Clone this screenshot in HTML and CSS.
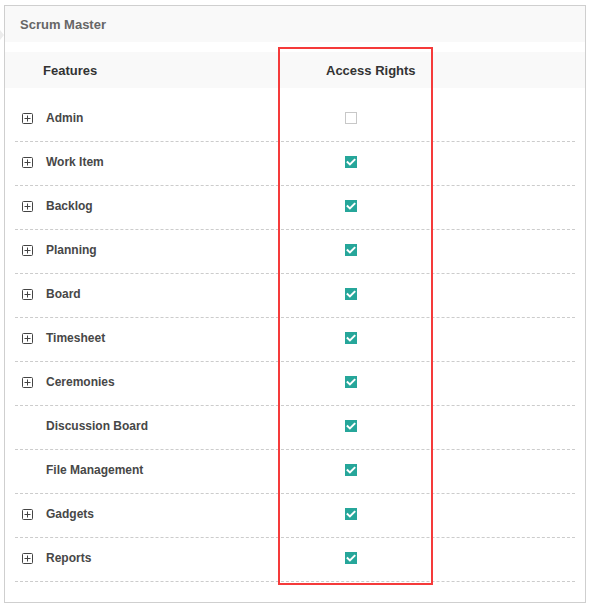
FILE: index.html
```html
<!DOCTYPE html>
<html>
<head>
<meta charset="utf-8">
<link rel="stylesheet" href="styles.css">
</head>
<body>
<div class="notch"></div>
<div class="panel">
  <div class="panel-title">Scrum Master</div>
  <div class="thead">
    <div class="th th-feat">Features</div>
    <div class="th th-acc">Access Rights</div>
  </div>
  <div class="rows">
    <div class="row"><div class="feat"><svg class="plus" viewBox="0 0 11 11"><rect x="0.5" y="0.5" width="10" height="10" rx="1"/><path d="M5.5 2.5v6M2.5 5.5h6"/></svg><span>Admin</span></div><div class="acc"><span class="cb"></span></div></div>
    <div class="row"><div class="feat"><svg class="plus" viewBox="0 0 11 11"><rect x="0.5" y="0.5" width="10" height="10" rx="1"/><path d="M5.5 2.5v6M2.5 5.5h6"/></svg><span>Work Item</span></div><div class="acc"><span class="cb on"><svg viewBox="0 0 12 12"><path d="M2.6 6.2l2.3 2.2 4.6-4.6"/></svg></span></div></div>
    <div class="row"><div class="feat"><svg class="plus" viewBox="0 0 11 11"><rect x="0.5" y="0.5" width="10" height="10" rx="1"/><path d="M5.5 2.5v6M2.5 5.5h6"/></svg><span>Backlog</span></div><div class="acc"><span class="cb on"><svg viewBox="0 0 12 12"><path d="M2.6 6.2l2.3 2.2 4.6-4.6"/></svg></span></div></div>
    <div class="row"><div class="feat"><svg class="plus" viewBox="0 0 11 11"><rect x="0.5" y="0.5" width="10" height="10" rx="1"/><path d="M5.5 2.5v6M2.5 5.5h6"/></svg><span>Planning</span></div><div class="acc"><span class="cb on"><svg viewBox="0 0 12 12"><path d="M2.6 6.2l2.3 2.2 4.6-4.6"/></svg></span></div></div>
    <div class="row"><div class="feat"><svg class="plus" viewBox="0 0 11 11"><rect x="0.5" y="0.5" width="10" height="10" rx="1"/><path d="M5.5 2.5v6M2.5 5.5h6"/></svg><span>Board</span></div><div class="acc"><span class="cb on"><svg viewBox="0 0 12 12"><path d="M2.6 6.2l2.3 2.2 4.6-4.6"/></svg></span></div></div>
    <div class="row"><div class="feat"><svg class="plus" viewBox="0 0 11 11"><rect x="0.5" y="0.5" width="10" height="10" rx="1"/><path d="M5.5 2.5v6M2.5 5.5h6"/></svg><span>Timesheet</span></div><div class="acc"><span class="cb on"><svg viewBox="0 0 12 12"><path d="M2.6 6.2l2.3 2.2 4.6-4.6"/></svg></span></div></div>
    <div class="row"><div class="feat"><svg class="plus" viewBox="0 0 11 11"><rect x="0.5" y="0.5" width="10" height="10" rx="1"/><path d="M5.5 2.5v6M2.5 5.5h6"/></svg><span>Ceremonies</span></div><div class="acc"><span class="cb on"><svg viewBox="0 0 12 12"><path d="M2.6 6.2l2.3 2.2 4.6-4.6"/></svg></span></div></div>
    <div class="row"><div class="feat"><span class="noicon"></span><span>Discussion Board</span></div><div class="acc"><span class="cb on"><svg viewBox="0 0 12 12"><path d="M2.6 6.2l2.3 2.2 4.6-4.6"/></svg></span></div></div>
    <div class="row"><div class="feat"><span class="noicon"></span><span>File Management</span></div><div class="acc"><span class="cb on"><svg viewBox="0 0 12 12"><path d="M2.6 6.2l2.3 2.2 4.6-4.6"/></svg></span></div></div>
    <div class="row"><div class="feat"><svg class="plus" viewBox="0 0 11 11"><rect x="0.5" y="0.5" width="10" height="10" rx="1"/><path d="M5.5 2.5v6M2.5 5.5h6"/></svg><span>Gadgets</span></div><div class="acc"><span class="cb on"><svg viewBox="0 0 12 12"><path d="M2.6 6.2l2.3 2.2 4.6-4.6"/></svg></span></div></div>
    <div class="row"><div class="feat"><svg class="plus" viewBox="0 0 11 11"><rect x="0.5" y="0.5" width="10" height="10" rx="1"/><path d="M5.5 2.5v6M2.5 5.5h6"/></svg><span>Reports</span></div><div class="acc"><span class="cb on"><svg viewBox="0 0 12 12"><path d="M2.6 6.2l2.3 2.2 4.6-4.6"/></svg></span></div></div>
  </div>
  <div class="highlight"></div>
</div>
</body>
</html>
```
FILE: styles.css
```css
html, body {
  margin: 0;
  padding: 0;
  background: #fff;
  font-family: "Liberation Sans", Arial, sans-serif;
}
body {
  position: relative;
  padding: 5px 4px 0 4px;
  width: 582px;
}
.notch {
  position: absolute;
  left: 0;
  top: 30px;
  width: 0;
  height: 0;
  border-top: 5px solid transparent;
  border-bottom: 5px solid transparent;
  border-left: 4px solid #ececec;
}
.panel {
  position: relative;
  box-sizing: border-box;
  width: 582px;
  height: 598px;
  border: 1px solid #cfcfcf;
  background: #fff;
}
.panel-title {
  height: 35px;
  line-height: 35px;
  padding-top: 1px;
  padding-left: 15px;
  background: #f9f9f9;
  color: #666;
  font-size: 13px;
  font-weight: bold;
}
.thead {
  margin-top: 10px;
  height: 36px;
  background: #f9f9f9;
  display: flex;
  align-items: center;
  font-size: 13px;
  font-weight: bold;
  color: #333;
}
.th-feat {
  width: 275px;
  padding-left: 38px;
  box-sizing: border-box;
}
.th-acc {
  padding-left: 46px;
}
.rows {
  margin: 10px 10px 0 10px;
}
.row {
  box-sizing: border-box;
  height: 44px;
  border-bottom: 1px dashed #cccccc;
  display: flex;
  align-items: center;
  padding-bottom: 3px;
}
.feat {
  width: 265px;
  display: flex;
  align-items: center;
  padding-left: 7px;
  box-sizing: border-box;
  font-size: 12px;
  font-weight: bold;
  color: #474747;
}
.plus, .noicon {
  width: 11px;
  height: 11px;
  margin-right: 13px;
  flex: none;
  display: block;
}
.plus rect {
  fill: none;
  stroke: #444;
  stroke-width: 1;
}
.plus path {
  stroke: #444;
  stroke-width: 1;
  fill: none;
}
.acc {
  padding-left: 65px;
  display: flex;
  align-items: center;
}
.cb {
  box-sizing: border-box;
  width: 12px;
  height: 12px;
  border: 1px solid #c8c8c8;
  background: #fff;
  display: block;
}
.cb.on {
  border: none;
  background: #26a69a;
}
.cb svg {
  display: block;
  width: 12px;
  height: 12px;
}
.cb svg path {
  fill: none;
  stroke: #fff;
  stroke-width: 2;
  stroke-linecap: square;
}
.highlight {
  position: absolute;
  left: 273px;
  top: 41px;
  width: 151px;
  height: 534px;
  border: 2px solid #f53a3a;
}
```
